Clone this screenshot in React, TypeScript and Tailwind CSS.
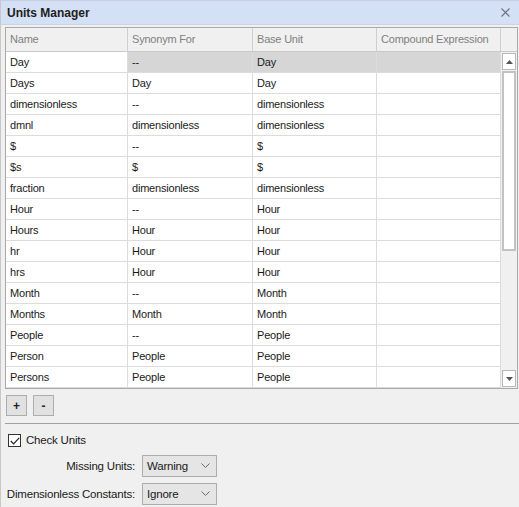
import React from "react";

const rows: [string, string, string][] = [
  ["Day", "--", "Day"],
  ["Days", "Day", "Day"],
  ["dimensionless", "--", "dimensionless"],
  ["dmnl", "dimensionless", "dimensionless"],
  ["$", "--", "$"],
  ["$s", "$", "$"],
  ["fraction", "dimensionless", "dimensionless"],
  ["Hour", "--", "Hour"],
  ["Hours", "Hour", "Hour"],
  ["hr", "Hour", "Hour"],
  ["hrs", "Hour", "Hour"],
  ["Month", "--", "Month"],
  ["Months", "Month", "Month"],
  ["People", "--", "People"],
  ["Person", "People", "People"],
  ["Persons", "People", "People"],
];

const cols = ["w-[122px]", "w-[125px]", "w-[124px]", "w-[124px]"];

function Chevron() {
  return (
    <svg width="9" height="6" viewBox="0 0 9 6" className="ml-auto">
      <path d="M0.5 0.5 L4.5 4.5 L8.5 0.5" fill="none" stroke="#6b6b6b" strokeWidth="1" />
    </svg>
  );
}

function Select({ value }: { value: string }) {
  return (
    <div className="flex items-center w-[75px] h-[22px] border border-[#adadad] bg-[#e5e5e5] pl-[4px] pr-[6px] text-[11.5px] text-[#1a1a1a]">
      {value}
      <Chevron />
    </div>
  );
}

export default function App() {
  return (
    <div
      className="w-[519px] h-[507px] bg-[#f0f0f0] flex flex-col overflow-hidden border-l border-[#c8c8c8] tracking-[-0.2px]"
      style={{ fontFamily: '"Liberation Sans", Arial, sans-serif' }}
    >
      {/* Title bar */}
      <div className="h-[25px] shrink-0 flex items-center bg-[#d3e0f5] border-t border-[#c5cfdd] border-b border-b-[#c9d3e3] px-[6px]">
        <span className="text-[12px] font-bold text-[#1e1e1e] tracking-normal">Units Manager</span>
        <svg width="9" height="9" viewBox="0 0 9 9" className="ml-auto mr-[3px]">
          <path d="M0.5 0.5 L8.5 8.5 M8.5 0.5 L0.5 8.5" stroke="#6a7485" strokeWidth="1.1" />
        </svg>
      </div>

      {/* Table */}
      <div className="ml-[4px] mt-[2px] w-[513px] shrink-0 border border-[#a9a9a9] bg-white flex flex-col">
        <div className="flex h-[24px] bg-[#f0f0f0] border-b border-[#c9c9c9]">
          {["Name", "Synonym For", "Base Unit", "Compound Expression"].map((h, i) => (
            <div
              key={h}
              className={`${cols[i]} shrink-0 border-r border-[#cfcfcf] flex items-center pl-[4px] text-[11px] text-[#808080]`}
            >
              {h}
            </div>
          ))}
          <div className="w-[16px]" />
        </div>
        <div className="flex">
          <div className="flex flex-col w-[495px]">
            {rows.map((r, ri) => (
              <div key={ri} className="flex h-[21px] border-b border-[#dcdcdc]">
                {[...r, ""].map((c, ci) => (
                  <div
                    key={ci}
                    className={`${cols[ci]} shrink-0 border-r border-[#dcdcdc] flex items-center pl-[4px] text-[11px] text-[#1a1a1a] ${
                      ri === 0 && ci > 0 ? "bg-[#d6d6d6]" : "bg-white"
                    }`}
                  >
                    {c}
                  </div>
                ))}
              </div>
            ))}
          </div>
          {/* Scrollbar */}
          <div className="w-[16px] bg-[#f0f0f0] flex flex-col items-center pt-[1px]">
            <div className="w-[14px] h-[17px] border border-[#b9b9b9] bg-white flex items-center justify-center">
              <svg width="7" height="4" viewBox="0 0 7 4">
                <path d="M0 4 L3.5 0 L7 4 Z" fill="#555" />
              </svg>
            </div>
            <div className="w-[14px] h-[180px] border-2 border-[#c2c2c2] bg-white mt-[1px]" />
            <div className="flex-1" />
            <div className="w-[14px] h-[17px] border border-[#b9b9b9] bg-white flex items-center justify-center mb-[1px]">
              <svg width="7" height="4" viewBox="0 0 7 4">
                <path d="M0 0 L3.5 4 L7 0 Z" fill="#555" />
              </svg>
            </div>
          </div>
        </div>
      </div>

      {/* +/- buttons */}
      <div className="flex gap-[6px] ml-[5px] mt-[6px] shrink-0">
        <div className="w-[21px] h-[21px] border border-[#adadad] bg-[#e1e1e1] flex items-center justify-center text-[12px] font-bold text-[#222]">
          +
        </div>
        <div className="w-[21px] h-[21px] border border-[#adadad] bg-[#e1e1e1] flex items-center justify-center text-[12px] font-bold text-[#222]">
          -
        </div>
      </div>

      <div className="ml-[4px] mt-[7px] h-px shrink-0 bg-[#a0a0a0]" />

      {/* Check Units */}
      <div className="flex items-center ml-[7px] mt-[8px] gap-[5px] shrink-0">
        <div className="w-[13px] h-[13px] border border-[#333] bg-white flex items-center justify-center">
          <svg width="10" height="8" viewBox="0 0 10 8">
            <path d="M0.8 4 L3.6 6.8 L9.2 0.8" fill="none" stroke="#222" strokeWidth="1.2" />
          </svg>
        </div>
        <span className="text-[11.5px] text-[#1a1a1a]">Check Units</span>
      </div>

      <div className="flex flex-col gap-[6px] mt-[6px] shrink-0">
        <div className="flex items-center">
          <span className="w-[134px] text-right whitespace-nowrap text-[11.5px] text-[#1a1a1a]">Missing Units:</span>
          <div className="ml-[7px]">
            <Select value="Warning" />
          </div>
        </div>
        <div className="flex items-center">
          <span className="w-[134px] text-right whitespace-nowrap text-[11.5px] text-[#1a1a1a]">Dimensionless Constants:</span>
          <div className="ml-[7px]">
            <Select value="Ignore" />
          </div>
        </div>
      </div>
    </div>
  );
}
